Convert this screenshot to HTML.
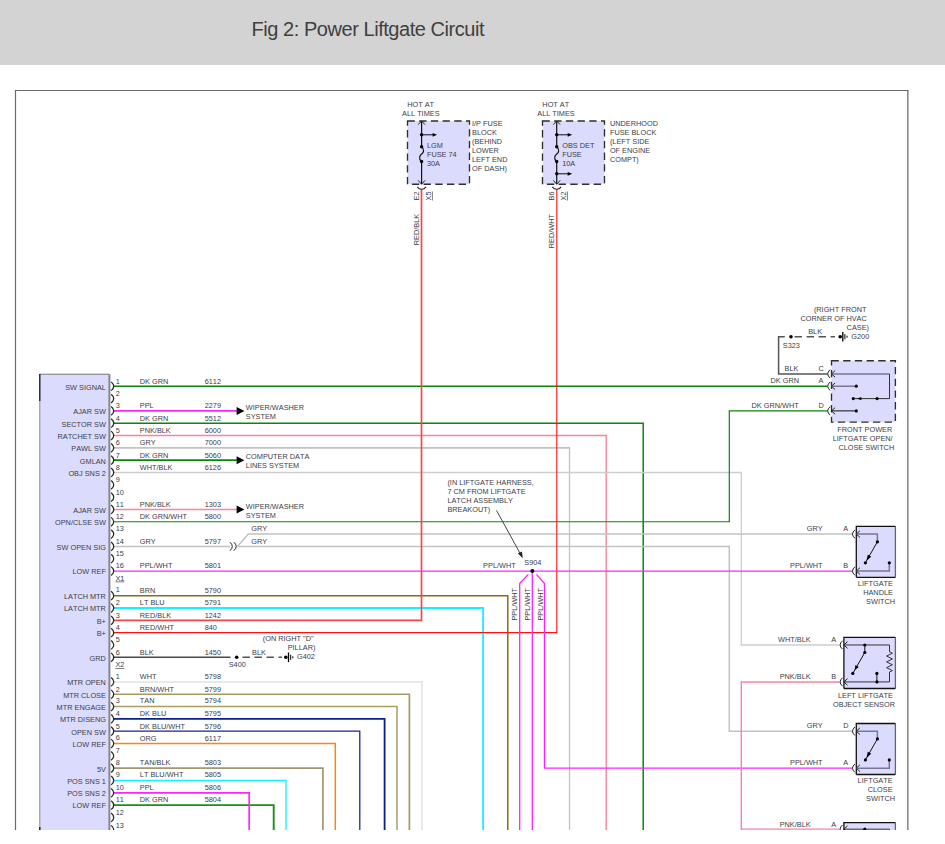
<!DOCTYPE html>
<html lang="en">
<head>
<meta charset="utf-8">
<title>Fig 2: Power Liftgate Circuit</title>
<style>
html,body{margin:0;padding:0;background:#fff}
body{width:945px;height:844px;overflow:hidden;position:relative;font-family:"Liberation Sans",sans-serif}
.hdr{position:absolute;left:0;top:0;width:945px;height:65px;background:#d3d3d3}
.hdr span{position:absolute;left:251.5px;top:17px;font-size:20px;line-height:24px;color:#404040;white-space:nowrap;letter-spacing:-0.45px}
svg{position:absolute;left:0;top:0;display:block}
svg text{font-family:"Liberation Sans",sans-serif;font-size:6.6px;fill:#3c3c48;font-kerning:none}
</style>
</head>
<body>
<div class="hdr"><span>Fig 2: Power Liftgate Circuit</span></div>
<svg width="945" height="844" viewBox="0 0 945 844">
<defs><clipPath id="cut"><rect x="0" y="66" width="945" height="764"/></clipPath></defs>
<g clip-path="url(#cut)">
<path d="M907.8 90.5 V830" stroke="#8e8e8e" stroke-width="1.7" fill="none"/>
<path d="M15.5 830 V90.5 H908.6" stroke="#6c6c6c" stroke-width="1.2" fill="none"/>
<rect x="39.5" y="374.2" width="69.9" height="455.8" fill="#dbdbfd"/>
<path d="M39.5 374.2 H109.4" stroke="#777" stroke-width="1" fill="none"/>
<path d="M109.4 374.2 V830" stroke="#85858f" stroke-width="2.0" fill="none"/>
<path d="M39.8 401 V830" stroke="#8888a0" stroke-width="1" fill="none"/>
<path d="M39.8 374 V401" stroke="#111" stroke-width="1.3" fill="none"/>
<path d="M39.8 827 V830" stroke="#111" stroke-width="1.3" fill="none"/>
<path d="M113.8 423.21 H643.2 V830" stroke="#0a860a" stroke-width="1.5" fill="none"/>
<path d="M606.2 435.53 V830" stroke="#f8849e" stroke-width="1.4" fill="none"/>
<path d="M113.8 435.53 H606.9" stroke="#f8849e" stroke-width="1.6" fill="none"/>
<path d="M569.5 447.85 V830" stroke="#c2c2c2" stroke-width="1.3" fill="none"/>
<path d="M113.8 447.85 H570.1" stroke="#c2c2c2" stroke-width="1.7" fill="none"/>
<path d="M741.3 472.49 V644.97 H839.6" stroke="#cecece" stroke-width="1.35" fill="none"/>
<path d="M113.8 472.49 H741.9" stroke="#cecece" stroke-width="1.6" fill="none"/>
<path d="M113.8 521.77 H729.3 V410.89 H827.6" stroke="#0a860a" stroke-width="1.2" fill="none"/>
<path d="M113.8 386.25 H827.6" stroke="#0a860a" stroke-width="1.6" fill="none"/>
<path d="M113.8 410.89 H237" stroke="#ff22ff" stroke-width="1.7" fill="none"/>
<path d="M113.8 460.17 H237" stroke="#0a860a" stroke-width="1.6" fill="none"/>
<path d="M113.8 509.45 H237" stroke="#f8849e" stroke-width="1.4" fill="none"/>
<path d="M113.8 546.41 H230" stroke="#c2c2c2" stroke-width="1.5" fill="none"/>
<path d="M237.5 546.41 H729.3 V731.21 H852.4" stroke="#c2c2c2" stroke-width="1.5" fill="none"/>
<path d="M237.5 546.41 L248.3 534.09 H852.4" stroke="#c2c2c2" stroke-width="1.5" fill="none"/>
<path d="M113.8 595.69 H507.8 V830" stroke="#8c6a18" stroke-width="1.5" fill="none"/>
<path d="M113.8 608.01 H483.1 V830" stroke="#10f4ff" stroke-width="1.8" fill="none"/>
<path d="M113.8 620.33 H421.5 V189.5" stroke="#f04848" stroke-width="1.7" fill="none"/>
<path d="M113.8 632.65 H556.8 V189.5" stroke="#ff1010" stroke-width="1.1" fill="none"/>
<path d="M113.8 657.29 H230.5" stroke="#4a4a4a" stroke-width="1.5" fill="none"/>
<path d="M242.5 657.29 H282" stroke="#555" stroke-width="1.4" fill="none" stroke-dasharray="7.4 4.6"/>
<path d="M113.8 681.93 H421.9 V830" stroke="#e2e2e2" stroke-width="1.5" fill="none"/>
<path d="M113.8 694.25 H409.4 V830" stroke="#a89864" stroke-width="1.7" fill="none"/>
<path d="M113.8 706.57 H397.0 V830" stroke="#aa9c68" stroke-width="1.5" fill="none"/>
<path d="M113.8 718.89 H384.6 V830" stroke="#0c1f8c" stroke-width="1.8" fill="none"/>
<path d="M113.8 731.21 H359.8 V830" stroke="#16268f" stroke-width="1.25" fill="none"/>
<path d="M113.8 743.53 H335.3 V830" stroke="#ff8410" stroke-width="1.5" fill="none"/>
<path d="M113.8 768.17 H322.9 V830" stroke="#a09870" stroke-width="1.7" fill="none"/>
<path d="M113.8 780.49 H286.0 V830" stroke="#10f4ff" stroke-width="1.3" fill="none"/>
<path d="M113.8 805.13 H273.7 V830" stroke="#1a901a" stroke-width="1.9" fill="none"/>
<path d="M113.8 792.81 H249.2 V830" stroke="#ff22ff" stroke-width="1.7" fill="none"/>
<path d="M113.8 571.05 H852.4" stroke="#ff22ff" stroke-width="1.3" fill="none"/>
<path d="M532.3 571.05 V830" stroke="#ff22ff" stroke-width="1.3" fill="none"/>
<path d="M528.2 574.4 L519.7 583.5 V830" stroke="#ff22ff" stroke-width="1.3" fill="none"/>
<path d="M536.4 574.4 L544.5 583.5 V768.17 H852.4" stroke="#ff22ff" stroke-width="1.3" fill="none"/>
<path d="M839.6 681.93 H741.3 V830" stroke="#f8849e" stroke-width="1.4" fill="none"/>
<path d="M741.3 829.17 H839.6" stroke="#f8849e" stroke-width="1.4" fill="none"/>
<path d="M784.8 336.7 H778.6 V373.93 H827.6" stroke="#555" stroke-width="1.5" fill="none"/>
<path d="M794.6 336.7 H835" stroke="#555" stroke-width="1.4" fill="none" stroke-dasharray="7.4 4.6"/>
<path d="M111.2 381.85 Q116.3 386.25 111.2 390.65" stroke="#222" stroke-width="1.25" fill="none"/>
<path d="M111.2 394.17 Q116.3 398.57 111.2 402.97" stroke="#222" stroke-width="1.25" fill="none"/>
<path d="M111.2 406.49 Q116.3 410.89 111.2 415.29" stroke="#222" stroke-width="1.25" fill="none"/>
<path d="M111.2 418.81 Q116.3 423.21 111.2 427.61" stroke="#222" stroke-width="1.25" fill="none"/>
<path d="M111.2 431.13 Q116.3 435.53 111.2 439.93" stroke="#222" stroke-width="1.25" fill="none"/>
<path d="M111.2 443.45 Q116.3 447.85 111.2 452.25" stroke="#222" stroke-width="1.25" fill="none"/>
<path d="M111.2 455.77 Q116.3 460.17 111.2 464.57" stroke="#222" stroke-width="1.25" fill="none"/>
<path d="M111.2 468.09 Q116.3 472.49 111.2 476.89" stroke="#222" stroke-width="1.25" fill="none"/>
<path d="M111.2 480.41 Q116.3 484.81 111.2 489.21" stroke="#222" stroke-width="1.25" fill="none"/>
<path d="M111.2 492.73 Q116.3 497.13 111.2 501.53" stroke="#222" stroke-width="1.25" fill="none"/>
<path d="M111.2 505.05 Q116.3 509.45 111.2 513.85" stroke="#222" stroke-width="1.25" fill="none"/>
<path d="M111.2 517.37 Q116.3 521.77 111.2 526.17" stroke="#222" stroke-width="1.25" fill="none"/>
<path d="M111.2 529.69 Q116.3 534.09 111.2 538.49" stroke="#222" stroke-width="1.25" fill="none"/>
<path d="M111.2 542.01 Q116.3 546.41 111.2 550.81" stroke="#222" stroke-width="1.25" fill="none"/>
<path d="M111.2 554.33 Q116.3 558.73 111.2 563.13" stroke="#222" stroke-width="1.25" fill="none"/>
<path d="M111.2 566.65 Q116.3 571.05 111.2 575.45" stroke="#222" stroke-width="1.25" fill="none"/>
<path d="M111.2 591.29 Q116.3 595.69 111.2 600.09" stroke="#222" stroke-width="1.25" fill="none"/>
<path d="M111.2 603.61 Q116.3 608.01 111.2 612.41" stroke="#222" stroke-width="1.25" fill="none"/>
<path d="M111.2 615.93 Q116.3 620.33 111.2 624.73" stroke="#222" stroke-width="1.25" fill="none"/>
<path d="M111.2 628.25 Q116.3 632.65 111.2 637.05" stroke="#222" stroke-width="1.25" fill="none"/>
<path d="M111.2 640.57 Q116.3 644.97 111.2 649.37" stroke="#222" stroke-width="1.25" fill="none"/>
<path d="M111.2 652.89 Q116.3 657.29 111.2 661.69" stroke="#222" stroke-width="1.25" fill="none"/>
<path d="M111.2 677.53 Q116.3 681.93 111.2 686.33" stroke="#222" stroke-width="1.25" fill="none"/>
<path d="M111.2 689.85 Q116.3 694.25 111.2 698.65" stroke="#222" stroke-width="1.25" fill="none"/>
<path d="M111.2 702.17 Q116.3 706.57 111.2 710.97" stroke="#222" stroke-width="1.25" fill="none"/>
<path d="M111.2 714.49 Q116.3 718.89 111.2 723.29" stroke="#222" stroke-width="1.25" fill="none"/>
<path d="M111.2 726.81 Q116.3 731.21 111.2 735.61" stroke="#222" stroke-width="1.25" fill="none"/>
<path d="M111.2 739.13 Q116.3 743.53 111.2 747.93" stroke="#222" stroke-width="1.25" fill="none"/>
<path d="M111.2 751.45 Q116.3 755.85 111.2 760.25" stroke="#222" stroke-width="1.25" fill="none"/>
<path d="M111.2 763.77 Q116.3 768.17 111.2 772.57" stroke="#222" stroke-width="1.25" fill="none"/>
<path d="M111.2 776.09 Q116.3 780.49 111.2 784.89" stroke="#222" stroke-width="1.25" fill="none"/>
<path d="M111.2 788.41 Q116.3 792.81 111.2 797.21" stroke="#222" stroke-width="1.25" fill="none"/>
<path d="M111.2 800.73 Q116.3 805.13 111.2 809.53" stroke="#222" stroke-width="1.25" fill="none"/>
<path d="M111.2 813.05 Q116.3 817.45 111.2 821.85" stroke="#222" stroke-width="1.25" fill="none"/>
<path d="M111.2 825.37 Q116.3 829.77 111.2 834.17" stroke="#222" stroke-width="1.25" fill="none"/>
<text transform="translate(105.9 389.6) scale(1.112 1)" text-anchor="end">SW SIGNAL</text>
<text transform="translate(105.9 414.2) scale(1.112 1)" text-anchor="end">AJAR SW</text>
<text transform="translate(105.9 426.5) scale(1.112 1)" text-anchor="end">SECTOR SW</text>
<text transform="translate(105.9 438.8) scale(1.112 1)" text-anchor="end">RATCHET SW</text>
<text transform="translate(105.9 451.2) scale(1.112 1)" text-anchor="end">PAWL SW</text>
<text transform="translate(105.9 463.5) scale(1.112 1)" text-anchor="end">GMLAN</text>
<text transform="translate(105.9 475.8) scale(1.112 1)" text-anchor="end">OBJ SNS 2</text>
<text transform="translate(105.9 512.8) scale(1.112 1)" text-anchor="end">AJAR SW</text>
<text transform="translate(105.9 525.1) scale(1.112 1)" text-anchor="end">OPN/CLSE SW</text>
<text transform="translate(105.9 549.7) scale(1.112 1)" text-anchor="end">SW OPEN SIG</text>
<text transform="translate(105.9 574.3) scale(1.112 1)" text-anchor="end">LOW REF</text>
<text transform="translate(105.9 599.0) scale(1.112 1)" text-anchor="end">LATCH MTR</text>
<text transform="translate(105.9 611.3) scale(1.112 1)" text-anchor="end">LATCH MTR</text>
<text transform="translate(105.9 623.6) scale(1.112 1)" text-anchor="end">B+</text>
<text transform="translate(105.9 635.9) scale(1.112 1)" text-anchor="end">B+</text>
<text transform="translate(105.9 660.6) scale(1.112 1)" text-anchor="end">GRD</text>
<text transform="translate(105.9 685.2) scale(1.112 1)" text-anchor="end">MTR OPEN</text>
<text transform="translate(105.9 697.5) scale(1.112 1)" text-anchor="end">MTR CLOSE</text>
<text transform="translate(105.9 709.9) scale(1.112 1)" text-anchor="end">MTR ENGAGE</text>
<text transform="translate(105.9 722.2) scale(1.112 1)" text-anchor="end">MTR DISENG</text>
<text transform="translate(105.9 734.5) scale(1.112 1)" text-anchor="end">OPEN SW</text>
<text transform="translate(105.9 746.8) scale(1.112 1)" text-anchor="end">LOW REF</text>
<text transform="translate(105.9 771.5) scale(1.112 1)" text-anchor="end">5V</text>
<text transform="translate(105.9 783.8) scale(1.112 1)" text-anchor="end">POS SNS 1</text>
<text transform="translate(105.9 796.1) scale(1.112 1)" text-anchor="end">POS SNS 2</text>
<text transform="translate(105.9 808.4) scale(1.112 1)" text-anchor="end">LOW REF</text>
<text transform="translate(115.7 384.1) scale(1.112 1)" text-anchor="start">1</text>
<text transform="translate(115.7 395.8) scale(1.112 1)" text-anchor="start">2</text>
<text transform="translate(115.7 407.9) scale(1.112 1)" text-anchor="start">3</text>
<text transform="translate(115.7 421.1) scale(1.112 1)" text-anchor="start">4</text>
<text transform="translate(115.7 432.7) scale(1.112 1)" text-anchor="start">5</text>
<text transform="translate(115.7 444.9) scale(1.112 1)" text-anchor="start">6</text>
<text transform="translate(115.7 458.1) scale(1.112 1)" text-anchor="start">7</text>
<text transform="translate(115.7 469.5) scale(1.112 1)" text-anchor="start">8</text>
<text transform="translate(115.7 481.7) scale(1.112 1)" text-anchor="start">9</text>
<text transform="translate(115.7 495.0) scale(1.112 1)" text-anchor="start">10</text>
<text transform="translate(115.7 507.3) scale(1.112 1)" text-anchor="start">11</text>
<text transform="translate(115.7 518.8) scale(1.112 1)" text-anchor="start">12</text>
<text transform="translate(115.7 531.1) scale(1.112 1)" text-anchor="start">13</text>
<text transform="translate(115.7 544.3) scale(1.112 1)" text-anchor="start">14</text>
<text transform="translate(115.7 555.9) scale(1.112 1)" text-anchor="start">15</text>
<text transform="translate(115.7 568.0) scale(1.112 1)" text-anchor="start">16</text>
<text transform="translate(115.7 592.4) scale(1.112 1)" text-anchor="start">1</text>
<text transform="translate(115.7 604.9) scale(1.112 1)" text-anchor="start">2</text>
<text transform="translate(115.7 618.2) scale(1.112 1)" text-anchor="start">3</text>
<text transform="translate(115.7 629.5) scale(1.112 1)" text-anchor="start">4</text>
<text transform="translate(115.7 642.0) scale(1.112 1)" text-anchor="start">5</text>
<text transform="translate(115.7 655.2) scale(1.112 1)" text-anchor="start">6</text>
<text transform="translate(115.7 678.8) scale(1.112 1)" text-anchor="start">1</text>
<text transform="translate(115.7 692.1) scale(1.112 1)" text-anchor="start">2</text>
<text transform="translate(115.7 703.3) scale(1.112 1)" text-anchor="start">3</text>
<text transform="translate(115.7 715.8) scale(1.112 1)" text-anchor="start">4</text>
<text transform="translate(115.7 729.1) scale(1.112 1)" text-anchor="start">5</text>
<text transform="translate(115.7 740.4) scale(1.112 1)" text-anchor="start">6</text>
<text transform="translate(115.7 752.5) scale(1.112 1)" text-anchor="start">7</text>
<text transform="translate(115.7 765.2) scale(1.112 1)" text-anchor="start">8</text>
<text transform="translate(115.7 777.2) scale(1.112 1)" text-anchor="start">9</text>
<text transform="translate(115.7 789.8) scale(1.112 1)" text-anchor="start">10</text>
<text transform="translate(115.7 802.1) scale(1.112 1)" text-anchor="start">11</text>
<text transform="translate(115.7 815.4) scale(1.112 1)" text-anchor="start">12</text>
<text transform="translate(115.7 827.7) scale(1.112 1)" text-anchor="start">13</text>
<text transform="translate(115.4 580.6) scale(1.112 1)" text-anchor="start" text-decoration="underline">X1</text>
<text transform="translate(115.4 667.3) scale(1.112 1)" text-anchor="start" text-decoration="underline">X2</text>
<text transform="translate(139.8 384.2) scale(1.112 1)" text-anchor="start">DK GRN</text>
<text transform="translate(204.7 384.2) scale(1.112 1)" text-anchor="start">6112</text>
<text transform="translate(139.8 408.0) scale(1.112 1)" text-anchor="start">PPL</text>
<text transform="translate(204.7 408.0) scale(1.112 1)" text-anchor="start">2279</text>
<text transform="translate(139.8 421.2) scale(1.112 1)" text-anchor="start">DK GRN</text>
<text transform="translate(204.7 421.2) scale(1.112 1)" text-anchor="start">5512</text>
<text transform="translate(139.8 432.8) scale(1.112 1)" text-anchor="start">PNK/BLK</text>
<text transform="translate(204.7 432.8) scale(1.112 1)" text-anchor="start">6000</text>
<text transform="translate(139.8 445.0) scale(1.112 1)" text-anchor="start">GRY</text>
<text transform="translate(204.7 445.0) scale(1.112 1)" text-anchor="start">7000</text>
<text transform="translate(139.8 458.2) scale(1.112 1)" text-anchor="start">DK GRN</text>
<text transform="translate(204.7 458.2) scale(1.112 1)" text-anchor="start">5060</text>
<text transform="translate(139.8 469.6) scale(1.112 1)" text-anchor="start">WHT/BLK</text>
<text transform="translate(204.7 469.6) scale(1.112 1)" text-anchor="start">6126</text>
<text transform="translate(139.8 507.4) scale(1.112 1)" text-anchor="start">PNK/BLK</text>
<text transform="translate(204.7 507.4) scale(1.112 1)" text-anchor="start">1303</text>
<text transform="translate(139.8 518.9) scale(1.112 1)" text-anchor="start">DK GRN/WHT</text>
<text transform="translate(204.7 518.9) scale(1.112 1)" text-anchor="start">5800</text>
<text transform="translate(139.8 544.4) scale(1.112 1)" text-anchor="start">GRY</text>
<text transform="translate(204.7 544.4) scale(1.112 1)" text-anchor="start">5797</text>
<text transform="translate(139.8 568.1) scale(1.112 1)" text-anchor="start">PPL/WHT</text>
<text transform="translate(204.7 568.1) scale(1.112 1)" text-anchor="start">5801</text>
<text transform="translate(139.8 592.5) scale(1.112 1)" text-anchor="start">BRN</text>
<text transform="translate(204.7 592.5) scale(1.112 1)" text-anchor="start">5790</text>
<text transform="translate(139.8 605.0) scale(1.112 1)" text-anchor="start">LT BLU</text>
<text transform="translate(204.7 605.0) scale(1.112 1)" text-anchor="start">5791</text>
<text transform="translate(139.8 618.3) scale(1.112 1)" text-anchor="start">RED/BLK</text>
<text transform="translate(204.7 618.3) scale(1.112 1)" text-anchor="start">1242</text>
<text transform="translate(139.8 629.6) scale(1.112 1)" text-anchor="start">RED/WHT</text>
<text transform="translate(204.7 629.6) scale(1.112 1)" text-anchor="start">840</text>
<text transform="translate(139.8 655.3) scale(1.112 1)" text-anchor="start">BLK</text>
<text transform="translate(204.7 655.3) scale(1.112 1)" text-anchor="start">1450</text>
<text transform="translate(139.8 678.9) scale(1.112 1)" text-anchor="start">WHT</text>
<text transform="translate(204.7 678.9) scale(1.112 1)" text-anchor="start">5798</text>
<text transform="translate(139.8 692.2) scale(1.112 1)" text-anchor="start">BRN/WHT</text>
<text transform="translate(204.7 692.2) scale(1.112 1)" text-anchor="start">5799</text>
<text transform="translate(139.8 703.4) scale(1.112 1)" text-anchor="start">TAN</text>
<text transform="translate(204.7 703.4) scale(1.112 1)" text-anchor="start">5794</text>
<text transform="translate(139.8 715.9) scale(1.112 1)" text-anchor="start">DK BLU</text>
<text transform="translate(204.7 715.9) scale(1.112 1)" text-anchor="start">5795</text>
<text transform="translate(139.8 729.2) scale(1.112 1)" text-anchor="start">DK BLU/WHT</text>
<text transform="translate(204.7 729.2) scale(1.112 1)" text-anchor="start">5796</text>
<text transform="translate(139.8 740.5) scale(1.112 1)" text-anchor="start">ORG</text>
<text transform="translate(204.7 740.5) scale(1.112 1)" text-anchor="start">6117</text>
<text transform="translate(139.8 765.3) scale(1.112 1)" text-anchor="start">TAN/BLK</text>
<text transform="translate(204.7 765.3) scale(1.112 1)" text-anchor="start">5803</text>
<text transform="translate(139.8 777.3) scale(1.112 1)" text-anchor="start">LT BLU/WHT</text>
<text transform="translate(204.7 777.3) scale(1.112 1)" text-anchor="start">5805</text>
<text transform="translate(139.8 789.9) scale(1.112 1)" text-anchor="start">PPL</text>
<text transform="translate(204.7 789.9) scale(1.112 1)" text-anchor="start">5806</text>
<text transform="translate(139.8 802.2) scale(1.112 1)" text-anchor="start">DK GRN</text>
<text transform="translate(204.7 802.2) scale(1.112 1)" text-anchor="start">5804</text>
<path d="M236.6 406.89 L244.4 410.89 L236.6 414.89 Z" fill="#000"/>
<path d="M236.6 456.17 L244.4 460.17 L236.6 464.17 Z" fill="#000"/>
<path d="M236.6 505.45 L244.4 509.45 L236.6 513.45 Z" fill="#000"/>
<text transform="translate(245.8 409.8) scale(1.112 1)" text-anchor="start">WIPER/WASHER</text>
<text transform="translate(245.8 418.7) scale(1.112 1)" text-anchor="start">SYSTEM</text>
<text transform="translate(245.8 458.6) scale(1.112 1)" text-anchor="start">COMPUTER DATA</text>
<text transform="translate(245.8 467.7) scale(1.112 1)" text-anchor="start">LINES SYSTEM</text>
<text transform="translate(245.8 508.6) scale(1.112 1)" text-anchor="start">WIPER/WASHER</text>
<text transform="translate(245.8 517.5) scale(1.112 1)" text-anchor="start">SYSTEM</text>
<path d="M230.0 542.21 Q234.6 546.41 230.0 550.61" stroke="#222" stroke-width="1" fill="none"/>
<path d="M233.9 542.21 Q238.5 546.41 233.9 550.61" stroke="#222" stroke-width="1" fill="none"/>
<text transform="translate(251.3 530.9) scale(1.112 1)" text-anchor="start">GRY</text>
<text transform="translate(251.3 543.6) scale(1.112 1)" text-anchor="start">GRY</text>
<circle cx="236.7" cy="657.3" r="1.8" fill="#000"/>
<circle cx="285.8" cy="657.3" r="1.8" fill="#000"/>
<path d="M288.5 652.49 V662.09" stroke="#000" stroke-width="1.3" fill="none"/>
<path d="M290.7 654.69 V659.89" stroke="#000" stroke-width="1" fill="none"/>
<path d="M292.8 656.29 V658.29" stroke="#000" stroke-width="1" fill="none"/>
<text transform="translate(228.7 666.5) scale(1.112 1)" text-anchor="start">S400</text>
<text transform="translate(252.0 654.6) scale(1.112 1)" text-anchor="start">BLK</text>
<text transform="translate(297.0 658.7) scale(1.112 1)" text-anchor="start">G402</text>
<text transform="translate(313.6 640.8) scale(1.112 1)" text-anchor="end">(ON RIGHT &quot;D&quot;</text>
<text transform="translate(315.4 649.8) scale(1.112 1)" text-anchor="end">PILLAR)</text>
<circle cx="532.3" cy="571.0" r="2.0" fill="#000"/>
<text transform="translate(447.4 485.0) scale(1.112 1)" text-anchor="start">(IN LIFTGATE HARNESS,</text>
<text transform="translate(447.4 494.1) scale(1.112 1)" text-anchor="start">7 CM FROM LIFTGATE</text>
<text transform="translate(447.4 503.2) scale(1.112 1)" text-anchor="start">LATCH ASSEMBLY</text>
<text transform="translate(447.4 512.2) scale(1.112 1)" text-anchor="start">BREAKOUT)</text>
<path d="M496.5 510.4 L521.3 555.6" stroke="#333" stroke-width="0.9" fill="none"/>
<path d="M522.8 558.2 L517.9 553.6 L521.9 551.4 Z" fill="#222"/>
<text transform="translate(483.1 568.0) scale(1.112 1)" text-anchor="start">PPL/WHT</text>
<text transform="translate(524.3 564.8) scale(1.112 1)" text-anchor="start">S904</text>
<text transform="translate(517.3 620.6) rotate(-90) scale(1.112 1)" text-anchor="start">PPL/WHT</text>
<text transform="translate(529.6 620.6) rotate(-90) scale(1.112 1)" text-anchor="start">PPL/WHT</text>
<text transform="translate(542.6 620.6) rotate(-90) scale(1.112 1)" text-anchor="start">PPL/WHT</text>
<rect x="407.5" y="121" width="62" height="63.2" fill="#dbdbfd" stroke="#2e2e2e" stroke-width="1.35" stroke-dasharray="7.3 4.4"/>
<path d="M421.6 121 V184.2" stroke="#111" stroke-width="1.2" fill="none"/>
<path d="M418.20000000000005 124.6 L421.6 121 L425.0 124.6" stroke="#222" stroke-width="1" fill="none"/>
<path d="M418.20000000000005 180.4 L421.6 184.2 L425.0 180.4" stroke="#222" stroke-width="1" fill="none"/>
<circle cx="421.6" cy="134.8" r="1.7" fill="#000"/>
<path d="M421.6 134.8 H433.1" stroke="#111" stroke-width="1" fill="none"/>
<path d="M432.6 132.9 L437.0 134.8 L432.6 136.70000000000002 Z" fill="#000"/>
<rect x="418.6" y="147.5" width="6" height="13.5" fill="#dbdbfd"/>
<circle cx="421.6" cy="146.8" r="1.7" fill="#000"/>
<circle cx="421.6" cy="161.5" r="1.7" fill="#000"/>
<path d="M421.6 146.8 C425.20000000000005 149.5 423.20000000000005 153 421.6 154.1 C420.0 155.2 418.0 158.5 421.6 161.5" stroke="#111" stroke-width="1.2" fill="none"/>
<path d="M417.20000000000005 186.9 Q419.0 189.3 421.6 189.3 Q424.20000000000005 189.3 426.0 186.9" stroke="#222" stroke-width="1.1" fill="none"/>
<rect x="542.5" y="121" width="62" height="63.2" fill="#dbdbfd" stroke="#2e2e2e" stroke-width="1.35" stroke-dasharray="7.3 4.4"/>
<path d="M556.7 121 V184.2" stroke="#111" stroke-width="1.2" fill="none"/>
<path d="M553.3000000000001 124.6 L556.7 121 L560.1 124.6" stroke="#222" stroke-width="1" fill="none"/>
<path d="M553.3000000000001 180.4 L556.7 184.2 L560.1 180.4" stroke="#222" stroke-width="1" fill="none"/>
<circle cx="556.7" cy="134.8" r="1.7" fill="#000"/>
<path d="M556.7 134.8 H568.2" stroke="#111" stroke-width="1" fill="none"/>
<path d="M567.7 132.9 L572.1 134.8 L567.7 136.70000000000002 Z" fill="#000"/>
<circle cx="556.7" cy="173.8" r="1.7" fill="#000"/>
<path d="M556.7 173.8 H568.2" stroke="#111" stroke-width="1" fill="none"/>
<path d="M567.7 171.9 L572.1 173.8 L567.7 175.70000000000002 Z" fill="#000"/>
<rect x="553.7" y="147.5" width="6" height="13.5" fill="#dbdbfd"/>
<circle cx="556.7" cy="146.8" r="1.7" fill="#000"/>
<circle cx="556.7" cy="161.5" r="1.7" fill="#000"/>
<path d="M556.7 146.8 C560.3000000000001 149.5 558.3000000000001 153 556.7 154.1 C555.1 155.2 553.1 158.5 556.7 161.5" stroke="#111" stroke-width="1.2" fill="none"/>
<path d="M552.3000000000001 186.9 Q554.1 189.3 556.7 189.3 Q559.3000000000001 189.3 561.1 186.9" stroke="#222" stroke-width="1.1" fill="none"/>
<text transform="translate(420.6 107.0) scale(1.112 1)" text-anchor="middle">HOT AT</text>
<text transform="translate(420.8 115.9) scale(1.112 1)" text-anchor="middle">ALL TIMES</text>
<text transform="translate(555.8 107.0) scale(1.112 1)" text-anchor="middle">HOT AT</text>
<text transform="translate(556.0 115.9) scale(1.112 1)" text-anchor="middle">ALL TIMES</text>
<text transform="translate(426.9 147.5) scale(1.112 1)" text-anchor="start">LGM</text>
<text transform="translate(426.9 156.6) scale(1.112 1)" text-anchor="start">FUSE 74</text>
<text transform="translate(426.9 165.6) scale(1.112 1)" text-anchor="start">30A</text>
<text transform="translate(562.2 147.5) scale(1.112 1)" text-anchor="start">OBS DET</text>
<text transform="translate(562.2 156.6) scale(1.112 1)" text-anchor="start">FUSE</text>
<text transform="translate(562.2 165.6) scale(1.112 1)" text-anchor="start">10A</text>
<text transform="translate(472.0 125.8) scale(1.112 1)" text-anchor="start">I/P FUSE</text>
<text transform="translate(472.0 134.8) scale(1.112 1)" text-anchor="start">BLOCK</text>
<text transform="translate(472.0 143.8) scale(1.112 1)" text-anchor="start">(BEHIND</text>
<text transform="translate(472.0 152.8) scale(1.112 1)" text-anchor="start">LOWER</text>
<text transform="translate(472.0 161.8) scale(1.112 1)" text-anchor="start">LEFT END</text>
<text transform="translate(472.0 170.8) scale(1.112 1)" text-anchor="start">OF DASH)</text>
<text transform="translate(609.9 125.8) scale(1.112 1)" text-anchor="start">UNDERHOOD</text>
<text transform="translate(609.9 134.8) scale(1.112 1)" text-anchor="start">FUSE BLOCK</text>
<text transform="translate(609.9 143.8) scale(1.112 1)" text-anchor="start">(LEFT SIDE</text>
<text transform="translate(609.9 152.8) scale(1.112 1)" text-anchor="start">OF ENGINE</text>
<text transform="translate(609.9 161.8) scale(1.112 1)" text-anchor="start">COMPT)</text>
<text transform="translate(419.2 200.5) rotate(-90) scale(1.112 1)" text-anchor="start">E2</text>
<text transform="translate(431.0 200.5) rotate(-90) scale(1.112 1)" text-anchor="start" text-decoration="underline">X5</text>
<text transform="translate(554.4 200.5) rotate(-90) scale(1.112 1)" text-anchor="start">B6</text>
<text transform="translate(566.0 200.5) rotate(-90) scale(1.112 1)" text-anchor="start" text-decoration="underline">X2</text>
<text transform="translate(419.3 245.2) rotate(-90) scale(1.112 1)" text-anchor="start">RED/BLK</text>
<text transform="translate(554.3 248.2) rotate(-90) scale(1.112 1)" text-anchor="start">RED/WHT</text>
<rect x="831.5" y="360.7" width="63.9" height="61.4" fill="#dbdbfd" stroke="#2e2e2e" stroke-width="1.35" stroke-dasharray="7.3 4.4"/>
<path d="M831.5 373.93 H889.5" stroke="#787894" stroke-width="1.5" fill="none"/>
<path d="M889.5 373.93 V398.6 H853.3" stroke="#333" stroke-width="1" fill="none"/>
<path d="M831.5 386.25 H856.3" stroke="#787894" stroke-width="1.5" fill="none"/>
<path d="M831.5 410.89 H856.3" stroke="#111" stroke-width="1" fill="none"/>
<circle cx="856.3" cy="386.2" r="1.6" fill="#000"/>
<circle cx="856.3" cy="410.9" r="1.6" fill="#000"/>
<circle cx="853.3" cy="398.6" r="1.6" fill="#000"/>
<circle cx="877.1" cy="398.6" r="1.6" fill="#000"/>
<path d="M857 398.6 L861.4 396.90000000000003 L861.4 400.3 Z" fill="#000"/>
<path d="M830.1 369.73 Q825.3 373.93 830.1 378.13" stroke="#222" stroke-width="1" fill="none"/>
<path d="M835.1 370.63 L831.5 373.93 L835.1 377.23" stroke="#222" stroke-width="1" fill="none"/>
<path d="M830.1 382.05 Q825.3 386.25 830.1 390.45" stroke="#222" stroke-width="1" fill="none"/>
<path d="M835.1 382.95 L831.5 386.25 L835.1 389.55" stroke="#222" stroke-width="1" fill="none"/>
<path d="M830.1 406.69 Q825.3 410.89 830.1 415.09" stroke="#222" stroke-width="1" fill="none"/>
<path d="M835.1 407.59 L831.5 410.89 L835.1 414.19" stroke="#222" stroke-width="1" fill="none"/>
<text transform="translate(818.4 370.9) scale(1.112 1)" text-anchor="start">C</text>
<text transform="translate(818.4 383.4) scale(1.112 1)" text-anchor="start">A</text>
<text transform="translate(818.4 408.1) scale(1.112 1)" text-anchor="start">D</text>
<text transform="translate(798.4 370.9) scale(1.112 1)" text-anchor="end">BLK</text>
<text transform="translate(799.0 383.4) scale(1.112 1)" text-anchor="end">DK GRN</text>
<text transform="translate(798.8 407.7) scale(1.112 1)" text-anchor="end">DK GRN/WHT</text>
<text transform="translate(892.3 431.8) scale(1.112 1)" text-anchor="end">FRONT POWER</text>
<text transform="translate(892.6 440.9) scale(1.112 1)" text-anchor="end">LIFTGATE OPEN/</text>
<text transform="translate(894.2 449.8) scale(1.112 1)" text-anchor="end">CLOSE SWITCH</text>
<circle cx="791.0" cy="336.7" r="1.8" fill="#000"/>
<circle cx="840.2" cy="336.7" r="1.8" fill="#000"/>
<path d="M842.8 332 V341.6" stroke="#000" stroke-width="1.3" fill="none"/>
<path d="M844.9 334.1 V339.3" stroke="#000" stroke-width="1" fill="none"/>
<path d="M847 335.7 V337.7" stroke="#000" stroke-width="1" fill="none"/>
<text transform="translate(866.4 311.8) scale(1.112 1)" text-anchor="end">(RIGHT FRONT</text>
<text transform="translate(866.8 320.8) scale(1.112 1)" text-anchor="end">CORNER OF HVAC</text>
<text transform="translate(869.0 329.8) scale(1.112 1)" text-anchor="end">CASE)</text>
<text transform="translate(851.3 338.7) scale(1.112 1)" text-anchor="start">G200</text>
<text transform="translate(808.2 333.5) scale(1.112 1)" text-anchor="start">BLK</text>
<text transform="translate(782.8 347.7) scale(1.112 1)" text-anchor="start">S323</text>
<rect x="856.3" y="526.3" width="39.1" height="51.0" fill="#dbdbfd"/>
<path d="M895.4 526.3 V577.3" stroke="#666" stroke-width="1.3" fill="none"/>
<path d="M856.3 577.3 V526.3 H895.4" stroke="#111" stroke-width="1.3" fill="none"/>
<path d="M856.3 577.3 H895.4" stroke="#111" stroke-width="1.3" fill="none"/>
<path d="M856.3 534.09 H877.4 V541.7900000000001" stroke="#787894" stroke-width="1.5" fill="none"/>
<path d="M856.3 571.05 H889.3 V562.75" stroke="#787894" stroke-width="1.5" fill="none"/>
<path d="M877.4 541.7900000000001 L865.4 562.75" stroke="#111" stroke-width="1" fill="none"/>
<path d="M866.50 560.85 L867.75 554.65 L871.22 556.64 Z" fill="#000"/>
<circle cx="877.4" cy="541.8" r="1.6" fill="#000"/>
<circle cx="865.4" cy="562.8" r="1.6" fill="#000"/>
<circle cx="889.3" cy="562.8" r="1.6" fill="#000"/>
<path d="M854.9 529.89 Q850.1 534.09 854.9 538.29" stroke="#222" stroke-width="1" fill="none"/>
<path d="M859.9 530.79 L856.3 534.09 L859.9 537.39" stroke="#222" stroke-width="1" fill="none"/>
<path d="M854.9 566.85 Q850.1 571.05 854.9 575.25" stroke="#222" stroke-width="1" fill="none"/>
<path d="M859.9 567.75 L856.3 571.05 L859.9 574.35" stroke="#222" stroke-width="1" fill="none"/>
<text transform="translate(843.2 531.1) scale(1.112 1)" text-anchor="start">A</text>
<text transform="translate(843.2 567.8) scale(1.112 1)" text-anchor="start">B</text>
<text transform="translate(822.6 531.1) scale(1.112 1)" text-anchor="end">GRY</text>
<text transform="translate(822.6 567.8) scale(1.112 1)" text-anchor="end">PPL/WHT</text>
<text transform="translate(892.9 585.6) scale(1.112 1)" text-anchor="end">LIFTGATE</text>
<text transform="translate(892.9 594.6) scale(1.112 1)" text-anchor="end">HANDLE</text>
<text transform="translate(895.0 603.7) scale(1.112 1)" text-anchor="end">SWITCH</text>
<rect x="856.3" y="723.5" width="39.1" height="51.0" fill="#dbdbfd"/>
<path d="M895.4 723.5 V774.5" stroke="#666" stroke-width="1.3" fill="none"/>
<path d="M856.3 774.5 V723.5 H895.4" stroke="#111" stroke-width="1.3" fill="none"/>
<path d="M856.3 774.5 H895.4" stroke="#111" stroke-width="1.3" fill="none"/>
<path d="M856.3 731.21 H877.4 V738.9100000000001" stroke="#787894" stroke-width="1.5" fill="none"/>
<path d="M856.3 768.17 H889.3 V759.87" stroke="#787894" stroke-width="1.5" fill="none"/>
<path d="M877.4 738.9100000000001 L865.4 759.87" stroke="#111" stroke-width="1" fill="none"/>
<path d="M866.50 757.97 L867.75 751.77 L871.22 753.76 Z" fill="#000"/>
<circle cx="877.4" cy="738.9" r="1.6" fill="#000"/>
<circle cx="865.4" cy="759.9" r="1.6" fill="#000"/>
<circle cx="889.3" cy="759.9" r="1.6" fill="#000"/>
<path d="M854.9 727.01 Q850.1 731.21 854.9 735.41" stroke="#222" stroke-width="1" fill="none"/>
<path d="M859.9 727.91 L856.3 731.21 L859.9 734.51" stroke="#222" stroke-width="1" fill="none"/>
<path d="M854.9 763.97 Q850.1 768.17 854.9 772.37" stroke="#222" stroke-width="1" fill="none"/>
<path d="M859.9 764.87 L856.3 768.17 L859.9 771.47" stroke="#222" stroke-width="1" fill="none"/>
<text transform="translate(843.2 728.2) scale(1.112 1)" text-anchor="start">D</text>
<text transform="translate(843.2 765.0) scale(1.112 1)" text-anchor="start">A</text>
<text transform="translate(822.6 728.2) scale(1.112 1)" text-anchor="end">GRY</text>
<text transform="translate(822.6 765.0) scale(1.112 1)" text-anchor="end">PPL/WHT</text>
<text transform="translate(892.6 782.9) scale(1.112 1)" text-anchor="end">LIFTGATE</text>
<text transform="translate(892.6 791.9) scale(1.112 1)" text-anchor="end">CLOSE</text>
<text transform="translate(895.0 801.0) scale(1.112 1)" text-anchor="end">SWITCH</text>
<rect x="843.9" y="637.4" width="51.5" height="51.1" fill="#dbdbfd"/>
<path d="M895.4 637.4 V688.5" stroke="#666" stroke-width="1.3" fill="none"/>
<path d="M843.9 688.5 V637.4 H895.4" stroke="#111" stroke-width="1.3" fill="none"/>
<path d="M843.9 688.5 H895.4" stroke="#111" stroke-width="1.3" fill="none"/>
<path d="M843.9 644.97 H889.5 V651.77 l2.9 1.4 l-5.8 2.9 l5.8 2.9 l-5.8 2.9 l5.8 2.9 l-5.8 2.9 l5.8 2.9 l-2.9 1.4 V681.93 H843.9" stroke="#333" stroke-width="1" fill="none"/>
<path d="M864.8 644.97 V652.47" stroke="#111" stroke-width="1" fill="none"/>
<path d="M864.8 652.47 L852.8 673.43" stroke="#111" stroke-width="1" fill="none"/>
<path d="M854.60 670.33 L855.44 665.05 L858.73 666.93 Z" fill="#000"/>
<path d="M876.9 673.43 V681.93" stroke="#111" stroke-width="1" fill="none"/>
<circle cx="864.8" cy="645.0" r="1.6" fill="#000"/>
<circle cx="864.8" cy="652.5" r="1.6" fill="#000"/>
<circle cx="852.8" cy="673.4" r="1.6" fill="#000"/>
<circle cx="876.9" cy="673.4" r="1.6" fill="#000"/>
<circle cx="876.9" cy="681.9" r="1.6" fill="#000"/>
<path d="M842.5 640.77 Q837.7 644.97 842.5 649.17" stroke="#222" stroke-width="1" fill="none"/>
<path d="M847.5 641.67 L843.9 644.97 L847.5 648.27" stroke="#222" stroke-width="1" fill="none"/>
<path d="M842.5 677.73 Q837.7 681.93 842.5 686.13" stroke="#222" stroke-width="1" fill="none"/>
<path d="M847.5 678.63 L843.9 681.93 L847.5 685.23" stroke="#222" stroke-width="1" fill="none"/>
<text transform="translate(831.3 641.7) scale(1.112 1)" text-anchor="start">A</text>
<text transform="translate(831.3 678.6) scale(1.112 1)" text-anchor="start">B</text>
<text transform="translate(810.6 641.7) scale(1.112 1)" text-anchor="end">WHT/BLK</text>
<text transform="translate(810.6 678.6) scale(1.112 1)" text-anchor="end">PNK/BLK</text>
<text transform="translate(892.9 697.6) scale(1.112 1)" text-anchor="end">LEFT LIFTGATE</text>
<text transform="translate(895.0 706.7) scale(1.112 1)" text-anchor="end">OBJECT SENSOR</text>
<rect x="843.9" y="822.7" width="51.5" height="51.1" fill="#dbdbfd"/>
<path d="M895.4 822.7 V873.8000000000001" stroke="#666" stroke-width="1.3" fill="none"/>
<path d="M843.9 873.8000000000001 V822.7 H895.4" stroke="#111" stroke-width="1.3" fill="none"/>
<path d="M843.9 873.8000000000001 H895.4" stroke="#111" stroke-width="1.3" fill="none"/>
<path d="M843.9 829.17 H889.5 V835.97 l2.9 1.4 l-5.8 2.9 l5.8 2.9 l-5.8 2.9 l5.8 2.9 l-5.8 2.9 l5.8 2.9 l-2.9 1.4 V866.73 H843.9" stroke="#333" stroke-width="1" fill="none"/>
<path d="M864.8 829.17 V836.67" stroke="#111" stroke-width="1" fill="none"/>
<path d="M864.8 836.67 L852.8 858.23" stroke="#111" stroke-width="1" fill="none"/>
<path d="M854.60 855.13 L855.37 849.84 L858.69 851.69 Z" fill="#000"/>
<path d="M876.9 858.23 V866.73" stroke="#111" stroke-width="1" fill="none"/>
<circle cx="864.8" cy="829.2" r="1.6" fill="#000"/>
<circle cx="864.8" cy="836.7" r="1.6" fill="#000"/>
<circle cx="852.8" cy="858.2" r="1.6" fill="#000"/>
<circle cx="876.9" cy="858.2" r="1.6" fill="#000"/>
<circle cx="876.9" cy="866.7" r="1.6" fill="#000"/>
<path d="M842.5 824.97 Q837.7 829.17 842.5 833.37" stroke="#222" stroke-width="1" fill="none"/>
<path d="M847.5 825.87 L843.9 829.17 L847.5 832.47" stroke="#222" stroke-width="1" fill="none"/>
<path d="M842.5 862.53 Q837.7 866.73 842.5 870.93" stroke="#222" stroke-width="1" fill="none"/>
<path d="M847.5 863.43 L843.9 866.73 L847.5 870.03" stroke="#222" stroke-width="1" fill="none"/>
<text transform="translate(831.3 826.7) scale(1.112 1)" text-anchor="start">A</text>
<text transform="translate(810.6 826.7) scale(1.112 1)" text-anchor="end">PNK/BLK</text>
</g>
</svg>
</body>
</html>
